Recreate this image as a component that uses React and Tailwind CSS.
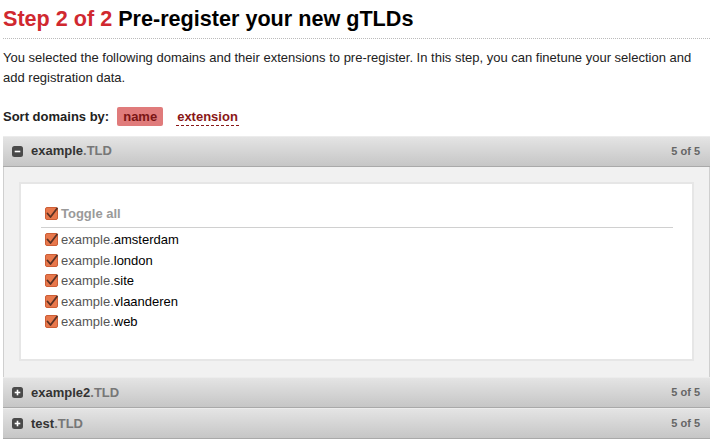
import React from "react";

function Check() {
  return (
    <svg width="13" height="13" viewBox="0 0 13 13" className="shrink-0">
      <rect x="0.5" y="0.5" width="12" height="12" rx="1.5" fill="#e8784c" stroke="#cc5e36" />
      <path d="M2.5 6.5 L5.5 10 L12 1.5" fill="none" stroke="#5a3225" strokeWidth="1.8" strokeLinecap="round" strokeLinejoin="round" />
    </svg>
  );
}

function Icon({ open }) {
  return (
    <svg width="11" height="11" viewBox="0 0 11 11" className="shrink-0">
      <rect x="0" y="0" width="11" height="11" rx="2.5" fill="#4a4a4a" />
      <rect x="2.7" y="4.7" width="5.6" height="1.6" fill="#fff" />
      {!open && <rect x="4.7" y="2.7" width="1.6" height="5.6" fill="#fff" />}
    </svg>
  );
}

function Header({ name, open }) {
  return (
    <div className="flex items-center h-[31px] px-[9px] bg-gradient-to-b from-[#e4e4e4] to-[#c6c6c6] border-b border-[#a9a9a9] border-t border-t-[#ececec]">
      <Icon open={open} />
      <div className="ml-[8px] font-bold text-[13px] text-[#333]">
        {name}<span className="text-[#777]">.TLD</span>
      </div>
      <div className="ml-auto font-bold text-[11px] text-[#666] pr-[1px]">5 of 5</div>
    </div>
  );
}

export default function App() {
  const items = ["amsterdam", "london", "site", "vlaanderen", "web"];
  return (
    <div className="w-[718px] h-[446px] bg-white overflow-hidden pl-[3px] pr-[8px]" style={{ fontFamily: '"Liberation Sans", Arial, sans-serif' }}>
      <h1 className="pt-[5px] pb-[5px] text-[21.6px] font-bold leading-[28px] text-black border-b border-dotted border-[#bbb]">
        <span className="text-[#d0282f]">Step 2 of 2</span> Pre-register your new gTLDs
      </h1>
      <p className="mt-[9px] text-[13px] leading-[20px] text-[#222]">
        You selected the following domains and their extensions to pre-register. In this step, you can finetune your selection and add registration data.
      </p>
      <div className="mt-[19px] flex items-center text-[13px] font-bold">
        <span className="text-[#222]">Sort domains by:</span>
        <span className="ml-[8px] bg-[#e07b7b] text-[#7a1515] px-[6px] h-[19px] leading-[19px] rounded-[2px]">name</span>
        <span className="ml-[13px] text-[#8a1717] border-b border-dashed border-[#8a1717] px-[1px] h-[19px] leading-[19px]">extension</span>
      </div>
      <div className="mt-[9px]">
        <Header name="example" open />
        <div className="bg-[#f1f1f1] border-x border-[#cfcfcf] px-[15px] pt-[15px] pb-[16px]">
          <div className="bg-white border-2 border-[#e6e6e6] pl-[20px] pr-[19px] pt-[21px] pb-[27px]">
            <div className="flex items-center gap-[3px] h-[18px] pl-[4px] text-[13px] font-bold text-[#9a9a9a]">
              <Check /> <span>Toggle all</span>
            </div>
            <div className="mt-[4px] border-t border-[#d0d0d0]" />
            <div className="mt-[2px] pl-[4px]">
              {items.map((t) => (
                <div key={t} className="flex items-center gap-[3px] h-[20.5px] text-[13px]">
                  <Check />
                  <span>
                    <span className="text-[#555]">example.</span>
                    <span className="text-black">{t}</span>
                  </span>
                </div>
              ))}
            </div>
          </div>
        </div>
        <Header name="example2" />
        <Header name="test" />
      </div>
    </div>
  );
}
